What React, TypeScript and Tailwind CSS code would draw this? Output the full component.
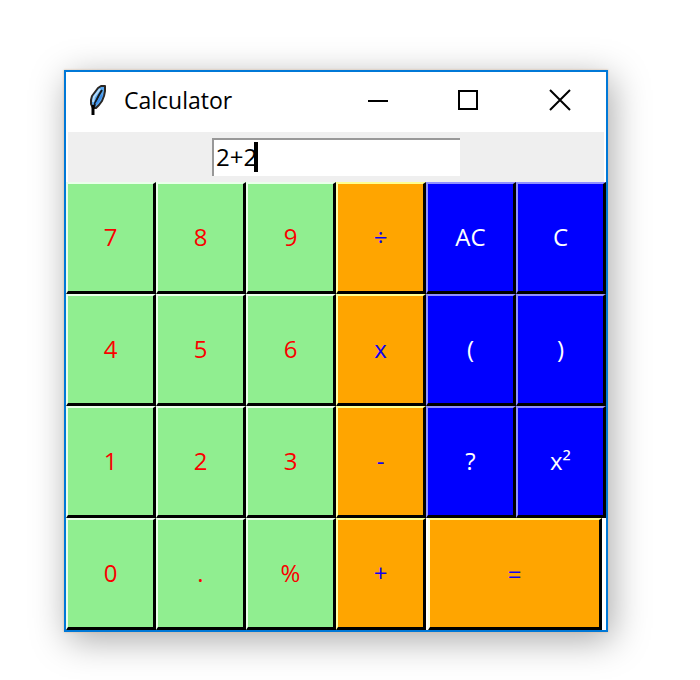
import React, { useState } from 'react';

type Kind = 'digit' | 'operator' | 'action';

interface Key {
  label: string;
  name: string;
  kind: Kind;
  text?: string;
}

const keys: Key[] = [
  { label: '7', name: 'Seven', kind: 'digit' },
  { label: '8', name: 'Eight', kind: 'digit' },
  { label: '9', name: 'Nine', kind: 'digit' },
  { label: '÷', name: 'Divide', kind: 'operator' },
  { label: 'AC', name: 'All clear', kind: 'action' },
  { label: 'C', name: 'Clear last', kind: 'action' },
  { label: '4', name: 'Four', kind: 'digit' },
  { label: '5', name: 'Five', kind: 'digit' },
  { label: '6', name: 'Six', kind: 'digit' },
  { label: 'x', name: 'Multiply', kind: 'operator' },
  { label: '(', name: 'Open bracket', kind: 'action' },
  { label: ')', name: 'Close bracket', kind: 'action' },
  { label: '1', name: 'One', kind: 'digit' },
  { label: '2', name: 'Two', kind: 'digit' },
  { label: '3', name: 'Three', kind: 'digit' },
  { label: '-', name: 'Subtract', kind: 'operator' },
  { label: '?', name: 'Help', kind: 'action' },
  { label: 'x²', name: 'Square', kind: 'action', text: '**2' },
  { label: '0', name: 'Zero', kind: 'digit' },
  { label: '.', name: 'Point', kind: 'digit' },
  { label: '%', name: 'Percent', kind: 'digit' },
  { label: '+', name: 'Add', kind: 'operator' },
];

const keyStyles: Record<Kind, string> = {
  digit: 'bg-[#90ee90] text-[#fa0000] border-t-[#eaffea] border-l-[#eaffea]',
  operator: 'bg-[#ffa500] text-[#1000f0] border-t-[#ffff90] border-l-[#ffffa8]',
  action: 'bg-[#0000ff] text-white border-t-[#9090ff] border-l-[#9090ff]',
};

const Feather = () => (
  <svg width="20" height="32" viewBox="0 0 20 32" aria-hidden="true">
    <path d="M17 2 L13 2 L10 4 L7 8 L4 12 L3 16 L3 20 L5 24 L8 24 L11 21 L14 17 L16 12 L17 7 Z" fill="#58a8f0" stroke="#2b2622" strokeWidth="2" strokeLinejoin="round" />
    <path d="M12 5 L9 9 L6 13 L5 18" fill="none" stroke="#b8dcf8" strokeWidth="2" />
    <path d="M14 6 L11 11 L9 15 L7 19 L6 24" fill="none" stroke="#14181c" strokeWidth="2" />
    <path d="M14 11 L11 16 L8 20" fill="none" stroke="#3c8ce8" strokeWidth="2" />
    <path d="M5 21 V31" fill="none" stroke="#000" strokeWidth="3" />
  </svg>
);

const App = () => {
  const [value, setValue] = useState('2+2');

  const handleKey = (key: Key) => {
    if (key.label === 'AC') setValue('');
    else if (key.label === 'C') setValue(value.slice(0, -1));
    else if (key.label !== '?') setValue(value + (key.text ?? key.label));
  };

  const handleEquals = () => {
    const match = value.match(/^([\d.]+)([-+x÷%])([\d.]+)$/);
    if (!match) return;
    const a = Number(match[1]);
    const b = Number(match[3]);
    const results: Record<string, number> = { '+': a + b, '-': a - b, x: a * b, '÷': a / b, '%': a % b };
    setValue(String(results[match[2]]));
  };

  return (
    <div className="min-h-screen bg-white px-16 py-[70px] font-['Open_Sans','Noto_Sans',sans-serif] text-2xl text-black">
      <main className="w-full max-w-[544px] border-2 border-[#0078d7] bg-white shadow-[0_0_2px_#d8b898,4px_8px_34px_rgba(0,0,0,0.34)]">
        <header className="flex h-[60px] items-center pb-1 pl-[22px]">
          <Feather />
          <h1 className="ml-4 flex-1 text-[23px] leading-8">Calculator</h1>
          <button type="button" aria-label="Minimize" className="flex h-full w-[92px] items-center justify-center">
            <svg width="24" height="24" viewBox="0 0 24 24">
              <path d="M4 13H24" stroke="#000" strokeWidth="2" />
            </svg>
          </button>
          <button type="button" aria-label="Maximize" className="flex h-full w-[92px] items-center justify-center">
            <svg width="24" height="24" viewBox="0 0 24 24">
              <rect x="3" y="3" width="18" height="18" fill="none" stroke="#000" strokeWidth="2" />
            </svg>
          </button>
          <button type="button" aria-label="Close" className="flex h-full w-[92px] items-center justify-center">
            <svg width="24" height="24" viewBox="0 0 24 24">
              <path d="M2 2L22 22M22 2L2 22" stroke="#000" strokeWidth="2" />
            </svg>
          </button>
        </header>

        <div className="mx-0.5 flex h-[50px] justify-center bg-[#efefef] pt-1.5">
          <div className="relative h-[38px] w-[248px]">
            <input
              type="text"
              aria-label="Expression"
              value={value}
              onChange={e => setValue(e.target.value)}
              className="h-full w-full border-t-2 border-l-2 border-[#989898] bg-white pb-1 pl-0.5 leading-8 caret-transparent outline-none"
            />
            <span className="absolute top-1 h-[30px] w-1 bg-black" style={{ left: 3 + value.length * 13 }} />
          </div>
        </div>

        <div className="grid auto-rows-[112px] grid-cols-6">
          {keys.map(key => (
            <button
              key={key.label}
              type="button"
              aria-label={key.name}
              onClick={() => handleKey(key)}
              className={`border-2 border-r-3 border-b-3 border-r-black border-b-black pb-0.5 ${keyStyles[key.kind]}`}
            >
              {key.label}
            </button>
          ))}
          <button
            type="button"
            aria-label="Equals"
            onClick={handleEquals}
            className="col-span-2 mr-1 ml-0.5 border-2 border-r-3 border-b-3 border-t-[#ffff90] border-r-black border-b-black border-l-[#ffffe0] bg-[#ffa500] text-[#1000f0]"
          >
            =
          </button>
        </div>
      </main>
    </div>
  );
};

export default App;
